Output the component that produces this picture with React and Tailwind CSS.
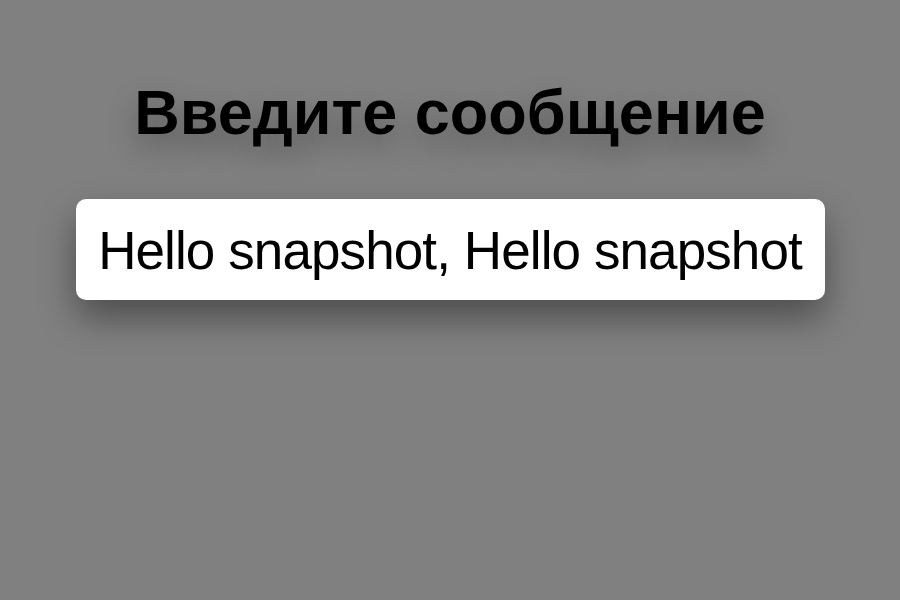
export default function App() {
  return (
    <div className="w-[900px] h-[600px] bg-[#808080] flex flex-col items-center overflow-hidden" style={{ fontFamily: '"Liberation Sans", Arial, sans-serif' }}>
      <h1 className="mt-[76px] text-[63px] leading-[72px] font-bold text-black [text-shadow:0_14px_30px_rgba(0,0,0,0.3)]">Введите сообщение</h1>
      <div className="mt-[51px] w-[749px] h-[101px] bg-white rounded-[10px] flex items-center justify-center shadow-[0_18px_36px_rgba(0,0,0,0.4)]">
        <span className="pt-[2px] text-[53px] leading-none text-black tracking-[-0.9px]">Hello snapshot, Hello snapshot</span>
      </div>
    </div>
  );
}
